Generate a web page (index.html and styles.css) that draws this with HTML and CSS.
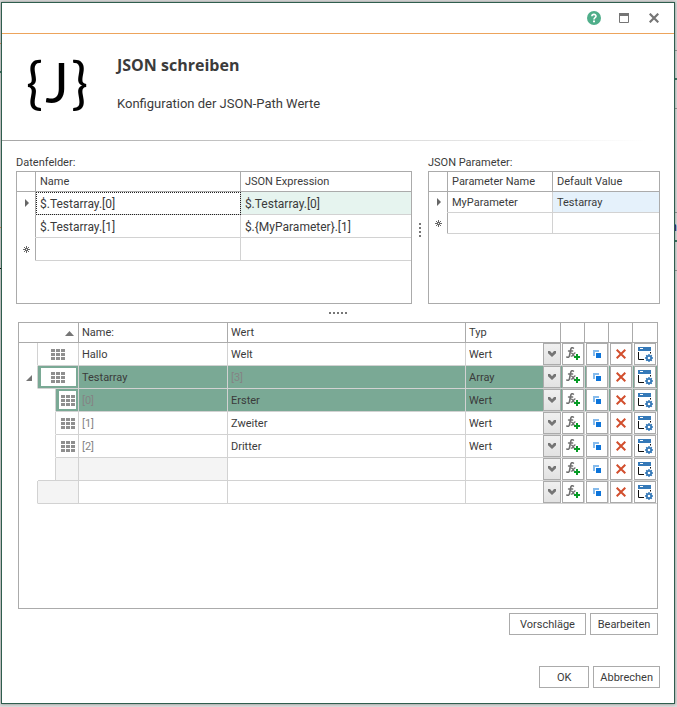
FILE: index.html
```html
<!DOCTYPE html>
<html lang="de">
<head>
<meta charset="utf-8">
<title>JSON schreiben</title>
<link rel="stylesheet" href="styles.css">
</head>
<body>
<svg class="sprite" aria-hidden="true">
  <symbol id="i-grid" viewBox="0 0 14 11"><path fill="#8f8f8f" d="M0 0h4v3H0zM5 0h4v3H5zM10 0h4v3h-4zM0 4h4v3H0zM5 4h4v3H5zM10 4h4v3h-4zM0 8h4v3H0zM5 8h4v3H5zM10 8h4v3h-4z"/></symbol>
  <symbol id="i-fx" viewBox="0 0 14 14"><g fill="none" stroke="#6f6f6f" stroke-linecap="round"><path stroke-width="1.600" d="M7.400 1.100C5.800.2 5 1 4.700 2.600L3.500 8.600C3.200 10.300 2 10.600.8 10M2.600 4h4"/><path stroke-width="1.300" d="M5.400 6.200c1.600-.6 1.500 3.500 3.300 2.900M9 6C7.500 6.300 7 9.500 5.200 9.200"/></g><path fill="#079b26" d="M10 7h2v2h2v2h-2v2h-2v-2H8V9h2z"/></symbol>
  <symbol id="i-copy" viewBox="0 0 8 8"><path fill="#86bbec" d="M0 0h6v2H2v4H0z"/><path fill="#0c74da" d="M3 3h5v5H3z"/></symbol>
  <symbol id="i-del" viewBox="0 0 10 10"><path fill="none" stroke="#d24e2d" stroke-width="2" d="M.7.700l8.600 8.600M9.300.700L.7 9.300"/></symbol>
  <symbol id="i-edit" viewBox="0 0 15 15"><path fill="#3579b8" d="M0 0h13v4H0z"/><path fill="#fff" d="M2 1h3v1H2z"/><path fill="none" stroke="#111" d="M.5 5v7.500H6M12.500 5v1.500"/><circle cx="11" cy="11" r="2.200" fill="none" stroke="#3579b8" stroke-width="1.800"/><path stroke="#3579b8" stroke-width="1.400" d="M11 7v1.500M11 13.500V15M7 11h1.500M13.500 11H15M8.200 8.200l1 1M12.800 12.800l1 1M8.200 13.800l1-1M12.800 9.200l1-1"/></symbol>
  <symbol id="i-chev" viewBox="0 0 8 6"><path fill="#757575" d="M0 0h2l2 2.200L6 0h2v2.200L4 6 0 2.200z"/></symbol>
  <symbol id="i-new" viewBox="0 0 7 7"><path stroke="#666" fill="none" d="M3.500 0v7M0 3.500h7M1 1l5 5M6 1L1 6"/><path fill="#fff" d="M3 3h1v1H3z"/></symbol>
  <symbol id="i-row" viewBox="0 0 4 8"><path fill="#666" d="M0 0l4 4-4 4z"/></symbol>
</svg>
<div class="backdrop" aria-hidden="true"><span>n</span></div>
<main class="dialog">
  <div class="titlebar">
    <button aria-label="Hilfe"><svg width="14" height="14" viewBox="0 0 14 14"><circle cx="7" cy="7" r="7" fill="#4fae8a"/><path d="M4.900 5.300C4.900 2.700 9.100 2.800 9 5.200 9 6.600 7 6.600 7 8.400" fill="none" stroke="#fff" stroke-width="1.600"/><path fill="#fff" d="M6 9.500h2v1.700H6z"/></svg></button>
    <button aria-label="Maximieren"><svg width="10" height="10" viewBox="0 0 10 10"><path d="M.5.500h9v9h-9z" fill="none" stroke="#757575"/><path d="M0 0h10v3H0z" fill="#757575"/></svg></button>
    <button aria-label="Schließen"><svg width="10" height="10" viewBox="0 0 10 10"><path d="M.7.700l8.600 8.600M9.300.700L.7 9.300" stroke="#757575" stroke-width="2.200"/></svg></button>
  </div>
  <header class="intro">
    <div class="logo" aria-hidden="true"><span>{</span><span>J</span><span>}</span></div>
    <div>
      <h1>JSON schreiben</h1>
      <p>Konfiguration der JSON-Path Werte</p>
    </div>
  </header>
  <section class="panes">
    <div class="pane fields">
      <h2>Datenfelder:</h2>
      <div class="box">
        <table>
          <colgroup><col class="c-mark"><col class="c-field"><col></colgroup>
          <thead><tr><th></th><th>Name</th><th>JSON Expression</th></tr></thead>
          <tbody>
            <tr><td class="mark"><svg width="4" height="8"><use href="#i-row"/></svg></td><td class="focus">$.Testarray.[0]</td><td class="mint">$.Testarray.[0]</td></tr>
            <tr><td class="mark"></td><td>$.Testarray.[1]</td><td>$.{MyParameter}.[1]</td></tr>
            <tr><td class="mark"><svg width="7" height="7"><use href="#i-new"/></svg></td><td></td><td></td></tr>
          </tbody>
        </table>
      </div>
    </div>
    <div class="split-v"><i></i><i></i><i></i><i></i></div>
    <div class="pane params">
      <h2>JSON Parameter:</h2>
      <div class="box">
        <table>
          <colgroup><col class="c-mark"><col class="c-param"><col></colgroup>
          <thead><tr><th></th><th>Parameter Name</th><th>Default Value</th></tr></thead>
          <tbody>
            <tr><td class="mark"><svg width="4" height="8"><use href="#i-row"/></svg></td><td>MyParameter</td><td class="blue">Testarray</td></tr>
            <tr><td class="mark"><svg width="7" height="7"><use href="#i-new"/></svg></td><td></td><td></td></tr>
          </tbody>
        </table>
      </div>
    </div>
  </section>
  <div class="split-h"><i></i><i></i><i></i><i></i><i></i></div>
  <section class="tree box">
    <table>
      <colgroup><col class="t-exp"><col class="t-ind"><col class="t-icon"><col class="t-name"><col><col class="t-type"><col class="t-btn"><col class="t-btn"><col class="t-btn"><col class="t-btn"></colgroup>
      <thead><tr><th colspan="3" class="sort"><svg width="9" height="5" viewBox="0 0 9 5"><path fill="#757575" d="M4.500 0L9 5H0z"/></svg></th><th>Name:</th><th>Wert</th><th>Typ</th><th></th><th></th><th></th><th></th></tr></thead>
      <tbody id="rows"></tbody>
    </table>
  </section>
  <div class="actions">
    <button class="wide">Vorschläge</button><button>Bearbeiten</button>
  </div>
  <footer class="actions confirm">
    <button class="ok">OK</button><button class="cancel">Abbrechen</button>
  </footer>
</main>
<script src="rows.js"></script>
</body>
</html>
```
FILE: styles.css
```css
* { box-sizing: border-box; }
body {
  margin: 0;
  min-height: 100vh;
  padding: 2px 2px 3px 1px;
  display: flex;
  background: #dcdcdc;
  color: #3b3b3b;
  font: 11px/14px Roboto, "Liberation Sans", sans-serif;
}
.sprite { position: absolute; width: 0; height: 0; }
svg { display: block; }
button, select { font: inherit; color: inherit; }

.backdrop {
  position: absolute;
  inset: 0;
  overflow: hidden;
  background:
    linear-gradient(#e29a62, #e29a62) 0 43px / 2px 1px,
    linear-gradient(#3f7a66, #3f7a66) 0 71px / 2px 2px,
    linear-gradient(#e29a62, #e29a62) 0 227px / 2px 1px,
    linear-gradient(#111, #111) 0 268px / 2px 1px,
    linear-gradient(#999, #999) 100% 50px / 3px 1px,
    linear-gradient(#3f7a66, #3f7a66) 100% 78px / 3px 2px,
    linear-gradient(#999, #999) 100% 108px / 3px 1px,
    linear-gradient(#999, #999) 100% 212px / 3px 1px,
    linear-gradient(#3f7a66, #3f7a66) 100% 240px / 3px 2px,
    linear-gradient(#999, #999) 100% 270px / 3px 1px;
  background-repeat: no-repeat;
}
.backdrop span { position: absolute; right: 0; top: 220px; color: #10106a; font-size: 12px; }

.dialog {
  position: relative;
  flex: 1;
  min-width: 0;
  display: flex;
  flex-direction: column;
  background: #fff;
  border: 1px solid #2f5e4e;
  box-shadow: 0 0 3px rgba(0, 0, 0, .4);
}
.titlebar {
  height: 31px;
  display: flex;
  justify-content: flex-end;
  align-items: center;
  gap: 10px;
  padding-right: 10px;
  border-bottom: 1px solid #eda45c;
}
.titlebar button {
  width: 20px;
  height: 20px;
  display: grid;
  place-items: center;
  padding: 0;
  border: 0;
  background: none;
}
.intro {
  display: flex;
  height: 107px;
  padding: 20px 24px 0;
  gap: 29px;
  border-bottom: 1px solid;
  border-image: linear-gradient(90deg, #a6a6a6, #d2d2d2 50%, #fff 96%) 1;
}
.logo {
  width: 62px;
  display: flex;
  justify-content: space-between;
  color: #000;
  font: 56px/56px Lato, sans-serif;
}
h1 { margin: 1px 0 0; font: bold 16px/20px "Open Sans", sans-serif; }
.intro p { margin: 20px 0 0; font-size: 13px; line-height: 18px; }

.panes { display: flex; padding: 14px 14px 0; }
.pane { min-width: 0; display: flex; flex-direction: column; }
.fields { flex: 396; }
.params { flex: 232; }
h2 { margin: 0; font: 11px/16px Roboto, sans-serif; }
.box { border: 1px solid #ababab; }
.pane .box { height: 133px; }
.split-v {
  width: 16px;
  display: flex;
  flex-direction: column;
  align-items: center;
  justify-content: center;
  gap: 2px;
}
.split-h { height: 18px; display: flex; justify-content: center; align-items: center; gap: 2px; }
.split-v i, .split-h i { width: 2px; height: 2px; background: #777; }

table { width: 100%; table-layout: fixed; border-collapse: separate; border-spacing: 0; }
th, td {
  padding: 1px 4px 0;
  border: solid #d2d2d2;
  border-width: 0 1px 1px 0;
  text-align: left;
  font-weight: normal;
  white-space: nowrap;
}
th { height: 20px; border-color: #ababab; }
td { height: 23px; }
.fields td { font-size: 12px; }
.params td { height: 21px; }
th:last-child, td:last-child { border-right: 0; }
.c-mark { width: 19px; }
.c-field { width: 52%; }
.c-param { width: 105px; }
.pane .mark { padding: 0 0 0 1px; border-bottom-color: transparent; border-right-color: #ababab; }
.mark svg { margin: 0 auto; }
.focus { outline: 1px dotted #222; outline-offset: -1px; }
.mint { background: #e6f4ef; }
.blue { background: #e5f1fb; }

.tree { flex: 1; margin: 0 16px; }
.tree th, .tree td { padding-left: 3px; }
.t-exp { width: 19px; }
.t-ind { width: 18px; }
.t-icon { width: 23px; }
.t-name { width: 149px; }
.t-type { width: 95px; }
.t-btn { width: 24px; }
.tree .sort { padding-left: 46px; }
.tree .exp, .tree .ind { padding: 0; border-bottom-color: transparent; }
.tree .blank { border-right-color: transparent; }
.tree .exp svg { margin: 2px 0 0 7px; }
.tree .closing { border-bottom-color: #d2d2d2; }
.tree .icon { padding: 0 2px 0 3px; }
.icon span { display: grid; place-items: center; height: 18px; padding-right: 1px; }
.nested .icon span { justify-items: end; }
.selected td:not(.exp, .ind) { background: #7aa995; }
.selected .icon span { background: #fff; }
.muted { color: #848484; }
.gray { background: #f4f4f4; }
.tree .type { padding: 0; border-right: 0; }
.combo { position: relative; height: 22px; }
.combo select {
  appearance: none;
  width: 100%;
  height: 22px;
  padding: 1px 22px 0 3px;
  border: 0;
  background: transparent;
}
.combo span {
  position: absolute;
  right: 0;
  top: 0;
  width: 18px;
  height: 22px;
  display: grid;
  place-items: center;
  border: 1px solid #ababab;
  background: linear-gradient(#f0f0f0, #e2e2e2);
  pointer-events: none;
}
.tree .tool { padding: 0 0 0 1px; }
.tool button {
  display: grid;
  place-items: center;
  width: 22px;
  height: 22px;
  padding: 0;
  border: 1px solid #ababab;
  background: #fff;
}

.actions { display: flex; justify-content: flex-end; gap: 4px; padding: 4px 16px 0; }
.actions button {
  height: 22px;
  padding: 1px 6px 0;
  border: 1px solid #ababab;
  background: #fff;
  min-width: 68px;
}
.actions .wide { min-width: 77px; }
.confirm { padding: 31px 14px 15px; }
.confirm .ok { min-width: 50px; }
.confirm .cancel { min-width: 66px; }
```
FILE: rows.js
```js
const rows = [
  { name: "Hallo", value: "Welt", type: "Wert" },
  { name: "Testarray", value: "[3]", type: "Array", selected: true, open: true, mutedValue: true },
  { name: "[0]", value: "Erster", type: "Wert", nested: true, selected: true },
  { name: "[1]", value: "Zweiter", type: "Wert", nested: true },
  { name: "[2]", value: "Dritter", type: "Wert", nested: true },
  { name: "", value: "", type: "", nested: true, empty: true },
  { name: "", value: "", type: "", empty: true }
];

const use = (id, w, h) => `<svg width="${w}" height="${h}"><use href="#${id}"/></svg>`;
const tools = [
  ["Ausdruck hinzufügen", "i-fx", 14, 14],
  ["Kopieren", "i-copy", 8, 8],
  ["Löschen", "i-del", 10, 10],
  ["Einstellungen", "i-edit", 15, 15]
];
const expander = '<svg width="6" height="6" viewBox="0 0 6 6"><path fill="#757575" d="M6 0v6H0z"/></svg>';

document.getElementById("rows").innerHTML = rows.map(r => {
  const cls = [r.selected && "selected", r.nested && "nested"].filter(Boolean).join(" ");
  const lead = r.nested
    ? `<td class="exp blank"></td><td class="ind${r.empty ? " closing" : ""}"></td>`
    : `<td class="exp">${r.open ? expander : ""}</td>`;
  const icon = `<td class="icon${r.empty ? " gray" : ""}"${r.nested ? "" : ' colspan="2"'}>${r.empty ? "" : `<span>${use("i-grid", 14, 11)}</span>`}</td>`;
  const name = `<td class="${r.nested ? "muted" : ""}${r.nested && r.empty ? " gray" : ""}">${r.name}</td>`;
  const value = `<td class="${r.mutedValue ? "muted" : ""}">${r.value}</td>`;
  const type = `<td class="type"><div class="combo"><select aria-label="Typ"><option>${r.type}</option></select><span>${use("i-chev", 8, 6)}</span></div></td>`;
  const buttons = tools.map(([label, id, w, h]) => `<td class="tool"><button aria-label="${label}">${use(id, w, h)}</button></td>`).join("");
  return `<tr class="${cls}">${lead}${icon}${name}${value}${type}${buttons}</tr>`;
}).join("");
```
